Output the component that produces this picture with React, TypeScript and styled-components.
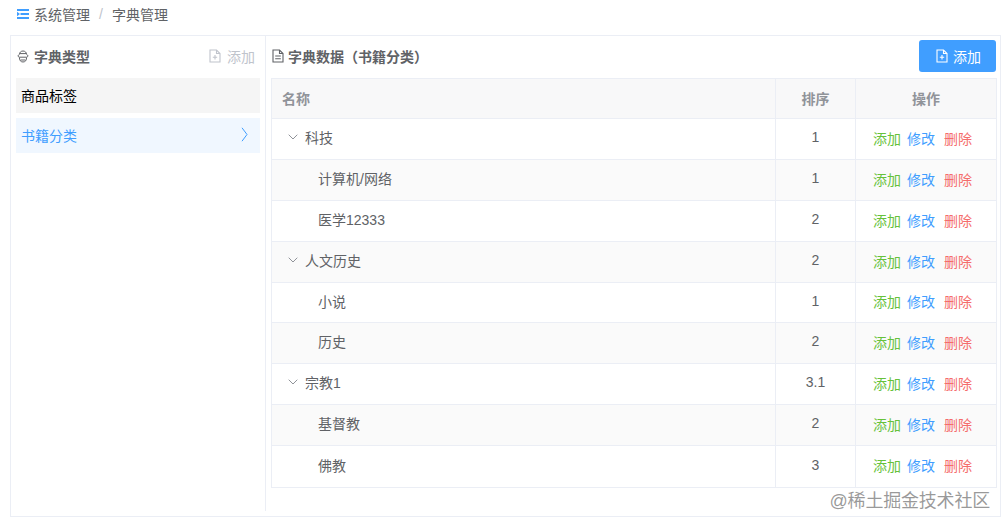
import React from "react";
import styled, { createGlobalStyle } from "styled-components";

const GlobalStyle = createGlobalStyle`
  html, body {
    margin: 0;
    padding: 0;
    background: #fff;
    font-family: "Liberation Sans", "Noto Sans CJK SC", sans-serif;
  }
`;

const Page = styled.div`
  position: relative;
  width: 1006px;
  height: 524px;
  overflow: hidden;
  padding: 0 5px 7px 10px;
  box-sizing: border-box;
  display: flex;
  flex-direction: column;
`;

const Crumbs = styled.div`
  height: 35px;
  display: flex;
  align-items: center;
  padding: 0 0 8px 7px;
  box-sizing: border-box;
  font-size: 14px;
  color: #606266;
`;

const CrumbSep = styled.span`
  margin: 0 9px;
  color: #c0c4cc;
`;

const Card = styled.div`
  flex: 1;
  display: flex;
  border: 1px solid #ebeef5;
  min-height: 0;
`;

const Side = styled.aside`
  width: 255px;
  margin: 0 0 5px;
  padding: 0 5px 0 5px;
  box-sizing: border-box;
  border-right: 1px solid #ebeef5;
`;

const SideHead = styled.div`
  height: 42px;
  padding-bottom: 2px;
  box-sizing: border-box;
  display: flex;
  align-items: center;
  justify-content: space-between;
  padding-right: 5px;
`;

const Title = styled.div`
  display: flex;
  align-items: center;
  gap: 4px;
  font-size: 14px;
  font-weight: bold;
  color: #606266;
`;

const SideTitle = styled(Title)`
  margin-left: 1px;
  gap: 5px;
`;

const GhostButton = styled.div`
  display: flex;
  align-items: center;
  gap: 6px;
  font-size: 14px;
  color: #c0c4cc;
`;

const TypeList = styled.div`
  display: flex;
  flex-direction: column;
  gap: 5px;
`;

const TypeItem = styled.div<{ $active?: boolean }>`
  height: 35px;
  padding: 0 12px 2px 5px;
  box-sizing: border-box;
  display: flex;
  align-items: center;
  justify-content: space-between;
  font-size: 14px;
  color: ${({ $active }) => ($active ? "#409eff" : "#000")};
  background: ${({ $active }) => ($active ? "#f0f7ff" : "#f5f5f5")};
`;

const Main = styled.section`
  flex: 1;
  min-width: 0;
  padding: 0 4px 0 5px;
  display: flex;
  flex-direction: column;
`;

const MainHead = styled.div`
  height: 42px;
  display: flex;
  align-items: center;
  justify-content: space-between;
`;

const MainTitle = styled(Title)`
  margin: -2px 0 0 1px;
`;

const PrimaryButton = styled.div`
  width: 77px;
  height: 32px;
  margin-top: -2px;
  padding-left: 2px;
  box-sizing: border-box;
  border-radius: 3px;
  background: #409eff;
  color: #fff;
  font-size: 14px;
  display: flex;
  align-items: center;
  justify-content: center;
  gap: 5px;
`;

const Table = styled.table`
  width: 725px;
  border-collapse: collapse;
  table-layout: fixed;
  border: 1px solid #ebeef5;
  font-size: 14px;
  color: #606266;
`;

const HeadCell = styled.th<{ $left?: boolean }>`
  height: 40px;
  box-sizing: border-box;
  padding: 0 0 2px;
  background: #f8f8f9;
  color: #909399;
  font-weight: bold;
  font-size: 14px;
  text-align: ${({ $left }) => ($left ? "left" : "center")};
  padding-left: ${({ $left }) => ($left ? "10px" : "0")};
  border: 1px solid #ebeef5;
`;

const Row = styled.tr<{ $striped?: boolean }>`
  background: ${({ $striped }) => ($striped ? "#fafafa" : "#fff")};
`;

const Cell = styled.td<{ $h: number }>`
  height: ${({ $h }) => $h}px;
  padding: 0 0 4px;
  box-sizing: border-box;
  text-align: center;
  border: 1px solid #ebeef5;
`;

const NameCell = styled(Cell)<{ $child?: boolean }>`
  text-align: left;
  padding-left: ${({ $child }) => ($child ? "46px" : "16px")};
`;

const NameInner = styled.span`
  display: inline-flex;
  align-items: center;
  gap: 7px;
`;

const Ops = styled.div`
  display: flex;
  justify-content: center;
  padding: 1px 7px 0 0;
`;

const OpLink = styled.span<{ $color: string; $gap?: number }>`
  color: ${({ $color }) => $color};
  margin-left: ${({ $gap }) => $gap ?? 0}px;
`;

const Watermark = styled.div`
  position: absolute;
  right: 16px;
  top: 486px;
  font-size: 18px;
  letter-spacing: -0.2px;
  color: rgba(120, 120, 120, 0.75);
`;

const FoldIcon = () => (
  <svg width="12" height="10" viewBox="0 0 12 10" style={{ marginRight: 5 }}>
    <path d="M0 1h12M3.5 5H12M0 9h12" stroke="#409eff" strokeWidth="1.8" />
    <path d="M0 2.8v4.4L3 5z" fill="#409eff" />
  </svg>
);

const CoinIcon = () => (
  <svg width="12" height="13" viewBox="0 0 12 13" fill="none" stroke="#606266" strokeWidth="1">
    <path d="M2.5 4.2C2.5 2.4 4 1 6 1s3.5 1.4 3.5 3.2" />
    <path d="M3 3.6h6" />
    <path d="M2.5 4.5C.8 5 .5 6.6 2.2 7.2h7.6c1.7-.6 1.4-2.2-.3-2.7" />
    <path d="M2.5 7.5c-.4 2.8 1.4 4.5 3.5 4.5s3.9-1.7 3.5-4.5" />
    <path d="M3.5 10h5" />
  </svg>
);

const DocAddIcon = ({ color }: { color: string }) => (
  <svg width="12" height="14" viewBox="0 0 12 14" fill="none" stroke={color} strokeWidth="1.1">
    <path d="M1 1h6.5L11 4.5V13H1z" />
    <path d="M7.5 1v3.5H11" />
    <path d="M3.8 8.2h4.4M6 6v4.4" />
  </svg>
);

const DocIcon = () => (
  <svg width="12" height="14" viewBox="0 0 12 14" fill="none" stroke="#606266" strokeWidth="1.1">
    <path d="M1 1h6.5L11 4.5V13H1z" />
    <path d="M7.5 1v3.5H11" />
    <path d="M3.2 7h5.6M3.2 9.8h5.6" />
  </svg>
);

const ChevronDown = () => (
  <svg width="10" height="6" viewBox="0 0 10 6" fill="none" stroke="#909399" strokeWidth="1">
    <path d="M0.7 0.7L5 5l4.3-4.3" />
  </svg>
);

const ChevronRight = () => (
  <svg width="7" height="15" viewBox="0 0 7 15" fill="none" stroke="#409eff" strokeWidth="1">
    <path d="M1 0.8L6 7.5l-5 6.7" />
  </svg>
);

const rows = [
  { name: "科技", sort: "1", parent: true, h: 41 },
  { name: "计算机/网络", sort: "1", striped: true, h: 41 },
  { name: "医学12333", sort: "2", h: 41 },
  { name: "人文历史", sort: "2", parent: true, striped: true, h: 41 },
  { name: "小说", sort: "1", h: 40 },
  { name: "历史", sort: "2", striped: true, h: 41 },
  { name: "宗教1", sort: "3.1", parent: true, h: 41 },
  { name: "基督教", sort: "2", striped: true, h: 41 },
  { name: "佛教", sort: "3", h: 42 },
];

export default function App() {
  return (
    <Page>
      <GlobalStyle />
      <Crumbs>
        <FoldIcon />
        系统管理
        <CrumbSep>/</CrumbSep>
        字典管理
      </Crumbs>
      <Card>
        <Side>
          <SideHead>
            <SideTitle>
              <CoinIcon />
              字典类型
            </SideTitle>
            <GhostButton>
              <DocAddIcon color="#c0c4cc" />
              添加
            </GhostButton>
          </SideHead>
          <TypeList>
            <TypeItem>商品标签</TypeItem>
            <TypeItem $active>
              书籍分类
              <ChevronRight />
            </TypeItem>
          </TypeList>
        </Side>
        <Main>
          <MainHead>
            <MainTitle>
              <DocIcon />
              字典数据（书籍分类）
            </MainTitle>
            <PrimaryButton>
              <DocAddIcon color="#fff" />
              添加
            </PrimaryButton>
          </MainHead>
          <Table>
            <colgroup>
              <col style={{ width: 504 }} />
              <col style={{ width: 80 }} />
              <col style={{ width: 141 }} />
            </colgroup>
            <thead>
              <tr>
                <HeadCell $left>名称</HeadCell>
                <HeadCell>排序</HeadCell>
                <HeadCell>操作</HeadCell>
              </tr>
            </thead>
            <tbody>
              {rows.map((r) => (
                <Row key={r.name} $striped={r.striped}>
                  <NameCell $h={r.h} $child={!r.parent}>
                    <NameInner>
                      {r.parent && <ChevronDown />}
                      {r.name}
                    </NameInner>
                  </NameCell>
                  <Cell $h={r.h}>{r.sort}</Cell>
                  <Cell $h={r.h}>
                    <Ops>
                      <OpLink $color="#67c23a">添加</OpLink>
                      <OpLink $color="#409eff" $gap={6}>修改</OpLink>
                      <OpLink $color="#f56c6c" $gap={9}>删除</OpLink>
                    </Ops>
                  </Cell>
                </Row>
              ))}
            </tbody>
          </Table>
        </Main>
      </Card>
      <Watermark>@稀土掘金技术社区</Watermark>
    </Page>
  );
}
